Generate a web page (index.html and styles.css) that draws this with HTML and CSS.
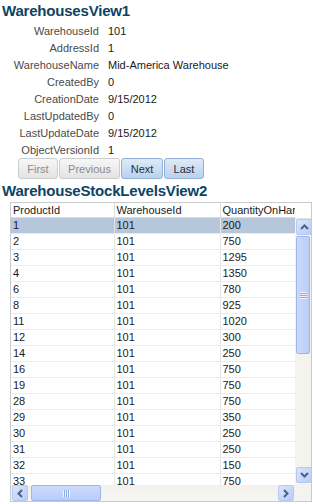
FILE: index.html
```html
<!DOCTYPE html>
<html lang="en">
<head>
    <meta charset="UTF-8">
    <title>Warehouses</title>
    <link rel="stylesheet" href="styles.css">
</head>
<body>
    <h2 class="view-title">WarehousesView1</h2>

    <div class="form">
        <div class="label">WarehouseId</div><div class="value">101</div>
        <div class="label">AddressId</div><div class="value">1</div>
        <div class="label">WarehouseName</div><div class="value">Mid-America Warehouse</div>
        <div class="label">CreatedBy</div><div class="value">0</div>
        <div class="label">CreationDate</div><div class="value">9/15/2012</div>
        <div class="label">LastUpdatedBy</div><div class="value">0</div>
        <div class="label">LastUpdateDate</div><div class="value">9/15/2012</div>
        <div class="label">ObjectVersionId</div><div class="value">1</div>
    </div>

    <div class="nav-buttons">
        <button class="btn btn-off btn-first">First</button>
        <button class="btn btn-off btn-prev">Previous</button>
        <button class="btn btn-on btn-next">Next</button>
        <button class="btn btn-on btn-last">Last</button>
    </div>

    <h2 class="view-title second">WarehouseStockLevelsView2</h2>

    <div class="table-box">
        <div class="viewport">
            <table class="grid">
                <colgroup>
                    <col class="c1"><col class="c2"><col class="c3">
                </colgroup>
                <thead>
                    <tr><th>ProductId</th><th>WarehouseId</th><th>QuantityOnHand</th></tr>
                </thead>
                <tbody id="rows"></tbody>
            </table>
        </div>

        <!-- vertical scrollbar -->
        <div class="vscroll">
            <div class="vscroll-head"></div>
            <div class="sb-btn">
                <svg width="9" height="6" viewBox="0 0 9 6"><path d="M1 5 L4.5 1.5 L8 5" fill="none" stroke="#4d6185" stroke-width="2"/></svg>
            </div>
            <div class="thumb thumb-v">
                <span class="grip-v"></span>
            </div>
            <div class="track"></div>
            <div class="sb-btn">
                <svg width="9" height="6" viewBox="0 0 9 6"><path d="M1 1 L4.5 4.5 L8 1" fill="none" stroke="#4d6185" stroke-width="2"/></svg>
            </div>
            <div class="vscroll-foot"></div>
        </div>

        <!-- horizontal scrollbar -->
        <div class="hscroll">
            <div class="sb-btn">
                <svg width="6" height="9" viewBox="0 0 6 9"><path d="M5 1 L1.5 4.5 L5 8" fill="none" stroke="#4d6185" stroke-width="2"/></svg>
            </div>
            <div class="thumb thumb-h">
                <span class="grip-h"></span>
            </div>
            <div class="track"></div>
            <div class="sb-btn">
                <svg width="6" height="9" viewBox="0 0 6 9"><path d="M1 1 L4.5 4.5 L1 8" fill="none" stroke="#4d6185" stroke-width="2"/></svg>
            </div>
        </div>
        <div class="corner"></div>
    </div>

    <script>
        // Stock level rows: product, warehouse, quantity
        const stock = [
            [1, 101, 200], [2, 101, 750], [3, 101, 1295], [4, 101, 1350],
            [6, 101, 780], [8, 101, 925], [11, 101, 1020], [12, 101, 300],
            [14, 101, 250], [16, 101, 750], [19, 101, 750], [28, 101, 750],
            [29, 101, 350], [30, 101, 250], [31, 101, 250], [32, 101, 150],
            [33, 101, 750]
        ];

        const tbody = document.getElementById('rows');
        stock.forEach(function(item, i) {
            const row = document.createElement('tr');
            if (i === 0) {
                row.className = 'selected';
            }
            item.forEach(function(val) {
                const td = document.createElement('td');
                td.textContent = val;
                row.appendChild(td);
            });
            tbody.appendChild(row);
        });
    </script>
</body>
</html>
```

FILE: styles.css
```css
body {
    margin: 0;
    font-family: Tahoma, 'Liberation Sans', Arial, sans-serif;
    font-size: 11px;
    color: #222;
    background: #fff;
}

.view-title {
    margin: 0;
    padding: 2px 0 0 2px;
    height: 21px;
    font-family: 'Liberation Sans', Arial, sans-serif;
    font-size: 15px;
    font-weight: bold;
    line-height: 18px;
    color: #0c4466;
    letter-spacing: -0.2px;
}

.view-title.second {
    height: 20px;
    padding-top: 3px;
}

/* form layout */
.form {
    display: grid;
    grid-template-columns: 99px auto;
    column-gap: 9px;
    grid-auto-rows: 17px;
    line-height: 17px;
}

.label {
    text-align: right;
    color: #4a4a4a;
}

.value {
    color: #1a1a1a;
}

/* record navigation buttons */
.nav-buttons {
    display: flex;
    gap: 1px;
    padding-left: 18px;
    margin-top: -1px;
}

.btn {
    height: 21px;
    padding: 0;
    font-family: inherit;
    font-size: 11px;
    border-radius: 3px;
    cursor: pointer;
}

.btn-first { width: 40px; }
.btn-prev { width: 61px; }
.btn-next { width: 42px; }
.btn-last { width: 40px; }

.btn-off {
    color: #8a8a8a;
    border: 1px solid #cdcdcd;
    background: linear-gradient(#f7f7f7, #e3e3e3);
}

.btn-on {
    color: #1f2f40;
    border: 1px solid #92b1d6;
    background: linear-gradient(#dfeaf7, #b9d1ee);
}

/* table with xp style scrollbars */
.table-box {
    margin-left: 10px;
    margin-top: 0;
    width: 300px;
    height: 298px;
    border: 1px solid #c5cbd1;
    display: grid;
    grid-template-columns: 284px 16px;
    grid-template-rows: 282px 16px;
    background: #fff;
}

.viewport {
    overflow: hidden;
}

.grid {
    border-collapse: collapse;
    table-layout: fixed;
    width: 284px;
}

.c1 { width: 103px; }
.c2 { width: 106px; }
.c3 { width: 75px; }

.grid th,
.grid td {
    padding: 0 0 0 2px;
    text-align: left;
    font-weight: normal;
    white-space: nowrap;
    overflow: hidden;
    color: #1a1a1a;
}

.grid th {
    height: 14px;
    line-height: 14px;
    border-right: 1px solid #dcdcdc;
    border-bottom: 1px solid #dcdcdc;
}

.grid td {
    height: 15px;
    line-height: 15px;
    border-right: 1px solid #e6e6e6;
    border-bottom: 1px solid #ececec;
}

.grid tr.selected td {
    background: #b6c7dc;
}

.vscroll {
    display: flex;
    flex-direction: column;
    background: #f4f3ee;
}

.vscroll-head {
    height: 15px;
    background: #fff;
    border-bottom: 1px solid #e6e6e6;
    flex: none;
}

.vscroll-foot {
    height: 2px;
    flex: none;
}

.hscroll {
    display: flex;
    background: linear-gradient(#f2f1ec, #f7f6f2);
}

.corner {
    background: #f4f3ee;
}

.sb-btn {
    flex: none;
    width: 14px;
    height: 14px;
    margin: 0 1px;
    border: 1px solid #b7c9ef;
    border-radius: 2px;
    background: linear-gradient(135deg, #d9e5fc, #b8cdf7);
    display: flex;
    align-items: center;
    justify-content: center;
    box-sizing: content-box;
}

.hscroll .sb-btn {
    margin: 0 1px;
    height: 14px;
}

.thumb {
    border: 1px solid #9db7ea;
    border-radius: 2px;
    background: linear-gradient(90deg, #cbdafc, #b9cdf8);
    display: flex;
    align-items: center;
    justify-content: center;
}

.thumb-v {
    height: 116px;
    margin: 1px 1px 0;
    flex: none;
}

.thumb-h {
    width: 68px;
    margin: 0 0 0 2px;
    background: linear-gradient(#cbdafc, #b9cdf8);
}

.track {
    flex: 1;
}

.grip-v {
    width: 7px;
    height: 7px;
    background: repeating-linear-gradient(#eef3fe 0 1px, #8faae0 1px 2px);
}

.grip-h {
    width: 7px;
    height: 7px;
    background: repeating-linear-gradient(90deg, #eef3fe 0 1px, #8faae0 1px 2px);
}
```
